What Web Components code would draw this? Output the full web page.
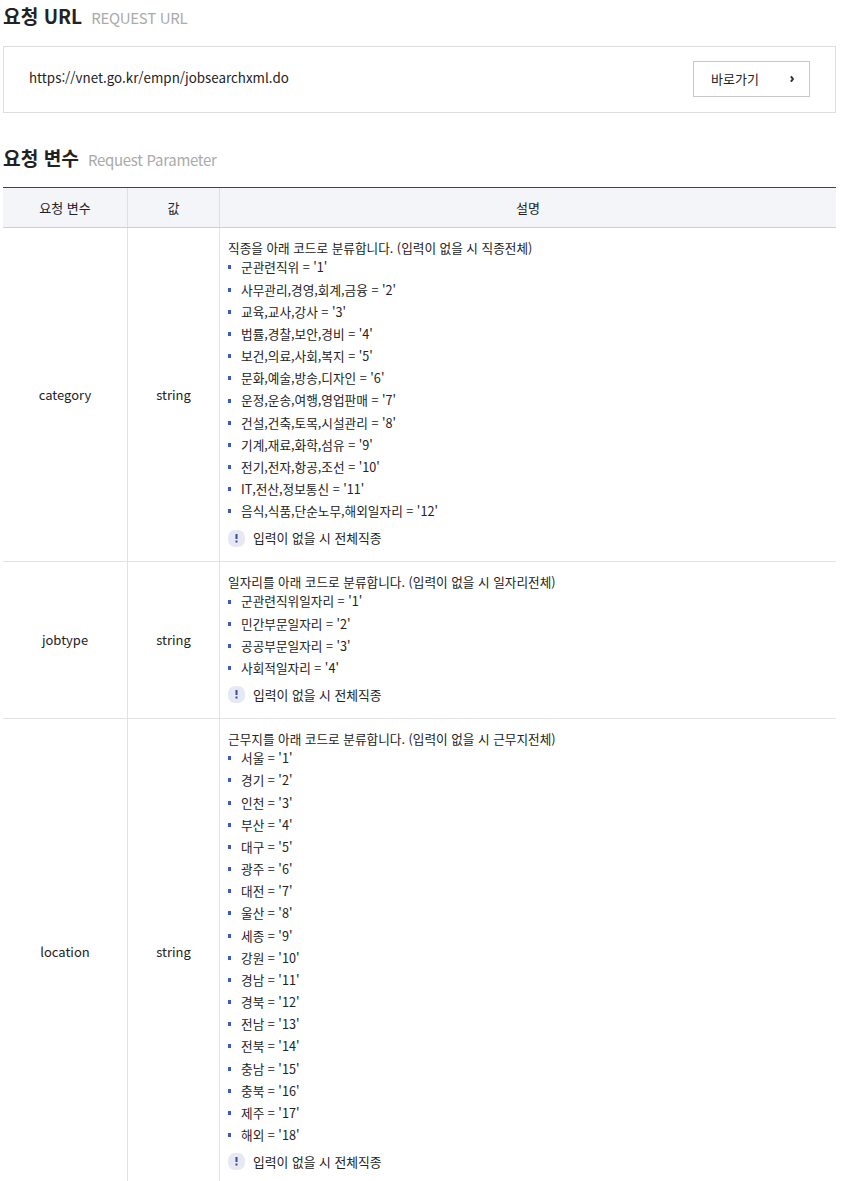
<!DOCTYPE html>
<html lang="ko"><head><meta charset="utf-8"><title>요청 URL</title>
<style>
html,body{margin:0;padding:0;background:#fff;height:1181px;overflow:hidden}
body{font-family:"Noto Sans CJK KR","Noto Sans",sans-serif;color:#222;}
</style></head><body>
<api-doc></api-doc>
<template id="t-title"><style>
:host{display:flex;align-items:baseline;gap:9px;color:#222}
b{font-size:19.2px;font-weight:700;line-height:30px}
span{font-size:15px;color:#aaa;letter-spacing:-.3px}
</style><b><slot></slot></b><span><slot name="sub"></slot></span></template>
<template id="t-urlbox"><style>
:host{display:flex;justify-content:space-between;align-items:flex-start;border:1px solid #ddd;height:67px;padding:14px 25px 0 25px;box-sizing:border-box;font-size:13.35px;line-height:34px;color:#222}
a{display:flex;justify-content:space-between;align-items:center;box-sizing:border-box;width:117px;height:36px;border:1px solid #c8c8c8;padding:0 15px 0 17px;color:#222;font-size:13px}
svg{width:4px;height:6px}
</style><span><slot></slot></span><a><span>바로가기</span><svg viewBox="0 0 4 6"><path d="M.9 .3L3 3 .9 5.7" fill="none" stroke="#333" stroke-width="2"/></svg></a></template>
<template id="t-table"><style>
:host{display:block;border-top:1px solid #3e4254;font-size:13px;color:#222}
.h{display:grid;grid-template-columns:125px 92px 1fr;height:39px;background:#f4f5f9;border-bottom:1px solid #cdced6;line-height:39px;text-align:center}
.h div:not(:last-child){border-right:1px solid #dddfe6}
</style><div class="h"><div>요청 변수</div><div>값</div><div>설명</div></div><slot></slot></template>
<template id="t-row"><style>
:host{display:grid;grid-template-columns:125px 92px 1fr;border-bottom:1px solid #e2e2e2;font-size:13px;color:#222}
.c{display:flex;align-items:center;justify-content:center;border-right:1px solid #e2e2e2}
.c+.c+div{padding:11px 8px 0 8px;min-width:0}
</style><div class="c"><slot name="name"></slot></div><div class="c"><slot name="type"></slot></div><div><slot></slot></div></template>
<template id="t-codes"><style>
:host{display:block;font-size:12.65px;line-height:22.18px;color:#222}
.d{line-height:18px;height:18px;margin-bottom:-.6px}
</style><div class="d"><slot name="desc"></slot></div><slot></slot></template>
<template id="t-code"><style>
:host{display:flex;align-items:center;height:22.18px;line-height:22.18px}
i{width:3px;height:4px;background:#3d5bc4;margin-right:10px;flex:none}
</style><i></i><span><slot></slot></span></template>
<template id="t-note"><style>
:host{display:flex;align-items:center;height:22px;margin:4.6px 0 12px;font-size:12.8px}
i{width:17px;height:17px;border-radius:7px;background:#e6e9f4;display:flex;align-items:center;justify-content:center;margin-right:8px;flex:none}
svg{width:3px;height:9px}
</style><i><svg viewBox="0 0 3 9"><path d="M0.5 0h2v5h-2zM.5 6.5h2v2h-2z" fill="#3a4a9c"/></svg></i><span><slot></slot></span></template>
<script>
function def(tag,id){customElements.define(tag,class extends HTMLElement{constructor(){super();this.attachShadow({mode:'open'}).append(document.getElementById(id).content.cloneNode(true))}})}
def('section-title','t-title');def('url-box','t-urlbox');def('param-table','t-table');def('param-row','t-row');def('code-list','t-codes');def('code-item','t-code');def('info-note','t-note');
const mk=(name,desc,items)=>`<param-row><span slot="name">${name}</span><span slot="type">string</span><code-list><span slot="desc">${desc}</span>${items.map(s=>`<code-item>${s}</code-item>`).join('')}<info-note>입력이 없을 시 전체직종</info-note></code-list></param-row>`;
const cat=['군관련직위','사무관리,경영,회계,금융','교육,교사,강사','법률,경찰,보안,경비','보건,의료,사회,복지','문화,예술,방송,디자인','운정,운송,여행,영업판매','건설,건축,토목,시설관리','기계,재료,화학,섬유','전기,전자,항공,조선','IT,전산,정보통신','음식,식품,단순노무,해외일자리'];
const job=['군관련직위일자리','민간부문일자리','공공부문일자리','사회적일자리'];
const loc=['서울','경기','인천','부산','대구','광주','대전','울산','세종','강원','경남','경북','전남','전북','충남','충북','제주','해외'];
const f=a=>a.map((s,i)=>`${s} = '${i+1}'`);
customElements.define('api-doc',class extends HTMLElement{constructor(){super();const r=this.attachShadow({mode:'open'});
r.innerHTML=`<style>:host{display:block;padding:0 5px 0 3px}
section-title.a{height:46px;padding-top:1px;box-sizing:border-box}
section-title.b{margin-top:30px;height:44px;padding-top:0;box-sizing:border-box}</style>
<section-title class="a">요청 URL<span slot="sub">REQUEST URL</span></section-title>
<url-box>https://vnet.go.kr/empn/jobsearchxml.do</url-box>
<section-title class="b">요청 변수<span slot="sub">Request Parameter</span></section-title>
<param-table>${mk('category','직종을 아래 코드로 분류합니다. (입력이 없을 시 직종전체)',f(cat))}${mk('jobtype','일자리를 아래 코드로 분류합니다. (입력이 없을 시 일자리전체)',f(job))}${mk('location','근무지를 아래 코드로 분류합니다. (입력이 없을 시 근무지전체)',f(loc))}</param-table>`}});
</script></body></html>
